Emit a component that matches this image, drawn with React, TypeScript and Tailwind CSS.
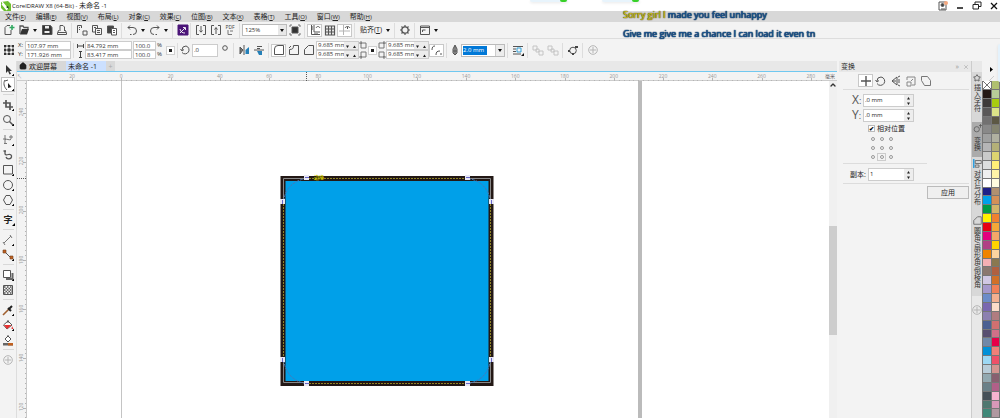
import type { ReactNode } from "react";
import { ChevronUp, Home, Star, X } from "lucide-react";

const menus = [
  ["文件", "F"], ["编辑", "E"], ["视图", "V"], ["布局", "L"], ["对象", "C"], ["效果", "C"],
  ["位图", "B"], ["文本", "X"], ["表格", "T"], ["工具", "O"], ["窗口", "W"], ["帮助", "H"],
];

const paletteLeft = [
  "none", "#231815", "#3e3a39", "#595757", "#727171", "#898989", "#9fa0a0", "#b5b5b6", "#c9caca", "#dcdddd",
  "#efefef", "#ffffff", "#1d2088", "#00a0e9", "#009944", "#fff100", "#e60012", "#e4007f", "#b04085", "#f08300",
  "#f4b0b4", "#8a7870", "#d0c8e4", "#a498cc", "#6c8cc8", "#7a68b0", "#8c80b0", "#4a6092", "#584e70", "#7088a8",
  "#0090d8", "#9cd8f4", "#b8ccd8", "#92a8b0", "#6a8088", "#465058", "#507870", "#408878",
];

const paletteRight = [
  "#b0c070", "#b8cc98", "#a8cc10", "#dce488", "#5c5844", "#848470", "#b0b0a0", "#b4b078", "#dcd470", "#fff078",
  "#fff4a8", "#fffce0", "#b09070", "#d49058", "#d4b468", "#f08030", "#f4a838", "#f4a868", "#ffd400", "#fcd4a0",
  "#8a7850", "#b06040", "#d07028", "#f08058", "#f4b090", "#fcdcc8", "#b07c80", "#d07070", "#d07088", "#e60048",
  "#f08078", "#ee5068", "#d49490", "#886070", "#b06088", "#f8b4d0", "#d898b8", "#b098a0",
];

const field = "min-w-0 border border-[#cccccc] bg-white px-px text-[6px] leading-[7px] text-[#333333] outline-none";

function Glyph({ children, className = "size-3" }: { children: ReactNode; className?: string }) {
  return (
    <svg viewBox="0 0 12 12" className={`${className} shrink-0`} fill="none" stroke="#555555" strokeWidth="1" aria-hidden="true">
      {children}
    </svg>
  );
}

function Tool({ label, boxed, children }: { label: string; boxed?: boolean; children: ReactNode }) {
  return (
    <button
      aria-label={label}
      className={`flex h-[13px] w-[15px] shrink-0 items-center justify-center ${boxed ? "border border-[#c8c8c8] bg-white" : ""}`}
    >
      <Glyph>{children}</Glyph>
    </button>
  );
}

function Arrow() {
  return (
    <svg viewBox="0 0 4 3" className="h-[3px] w-1" aria-hidden="true">
      <path d="M0 0h4L2 3z" fill="#111111" />
    </svg>
  );
}

function Caret({ label }: { label: string }) {
  return (
    <button aria-label={label} className="flex w-2 shrink-0 items-center justify-center">
      <Arrow />
    </button>
  );
}

function Separator() {
  return <div className="mx-[2px] h-[15px] w-px shrink-0 bg-[#dddddd]" />;
}

function Plus() {
  return (
    <>
      <circle cx="6" cy="6" r="4.3" stroke="#b5b5b5" />
      <path d="M6 3v6M3 6h6" stroke="#b5b5b5" />
    </>
  );
}

function Spinner({ wide }: { wide?: boolean }) {
  return wide ? (
    <div className="flex w-[9px] items-center justify-center bg-[#ededed]">
      <svg viewBox="0 0 9 8" className="h-2 w-[9px]" aria-hidden="true">
        <path d="M3 2.5h3L4.500 0zM3 5.500h3L4.500 8z" fill="#222222" />
      </svg>
    </div>
  ) : (
    <svg viewBox="0 0 14 9" className="h-[9px] w-[14px] shrink-0 bg-[#ececec]" aria-hidden="true">
      <path d="M2 3.500h3L3.500 6zM9 6h3l-1.500-2.500z" fill="#222222" />
    </svg>
  );
}

function CornerField({ label }: { label: string }) {
  return (
    <div className="flex h-[9px] w-[43px] overflow-hidden border border-[#cccccc] bg-white">
      <input aria-label={label} defaultValue="9.685 mm" className="w-[28px] min-w-0 pl-px text-[6px] leading-[7px] outline-none" />
      <Spinner />
    </div>
  );
}

function TitleBar() {
  return (
    <header className="flex h-[11px] items-center bg-white">
      <svg viewBox="0 0 10 10" className="ml-px size-[10px]" aria-hidden="true">
        <path d="M0 1l7-1 3 3v7H3L0 7z" fill="#6cc030" />
        <path d="M1 1l6 7M1 3l5 6" stroke="#ffffff" strokeWidth="1.200" />
        <path d="M5 6l3 2-1-3z" fill="#164010" />
      </svg>
      <h1 className="ml-px whitespace-nowrap text-[6px] leading-[10px] text-[#222222]">
        CorelDRAW X8 (64-Bit) - <span className="text-[7px]">未命名</span> -1
      </h1>
      <div className="ml-auto flex items-center gap-[5px]">
        <button aria-label="用户">
          <Glyph>
            <path d="M2 2h7v8H2zM4 9h4" />
            <circle cx="5.500" cy="5" r="1.500" fill="#444444" />
            <circle cx="9" cy="3" r="2" fill="#f4a880" stroke="none" />
          </Glyph>
        </button>
        <button aria-label="最小化">
          <Glyph><path d="M3 8h6" stroke="#111111" strokeWidth="1.500" /></Glyph>
        </button>
        <button aria-label="还原">
          <Glyph><path d="M4 4V2h6v4.500H8M2 4.500h5.500V9H2z" stroke="#222222" /></Glyph>
        </button>
        <button aria-label="关闭">
          <Glyph><path d="M3 3l6 6M9 3L3 9" stroke="#111111" strokeWidth="1.300" /></Glyph>
        </button>
      </div>
    </header>
  );
}

function MenuBar() {
  return (
    <nav className="flex h-[11px] items-center gap-[10px] bg-[#d8d8d8] pl-[5px]">
      {menus.map(([name, key]) => (
        <button key={name} className="shrink-0 whitespace-nowrap text-left text-[7px] leading-[10px] text-[#222222]">
          {name}
          <span className="text-[6px]">(<u>{key}</u>)</span>
        </button>
      ))}
    </nav>
  );
}

function StandardBar() {
  return (
    <div className="flex h-[17px] items-center border-b border-[#dddddd] pl-px">
      <Tool label="新建">
        <path d="M2 10.500V3.500l2-2h3M2 10.500h6V6" />
        <path d="M9 1v5M6.500 3.500h5" stroke="#30a860" strokeWidth="1.600" />
      </Tool>
      <Tool label="打开">
        <path d="M2 10V2h3l1 1.500h4V5" strokeWidth="1.300" />
        <path d="M2 10.500L4 5h7l-2 5.500z" fill="#333333" stroke="none" />
      </Tool>
      <Caret label="最近用过的文件" />
      <Tool label="保存">
        <path d="M1.500 1.500h8l1.500 2V10.500h-9.500z" fill="#333333" />
        <path d="M4 2h4v2.500H4zM3.500 7h5v2h-5z" fill="#eeeeee" stroke="none" />
      </Tool>
      <Tool label="打印"><path d="M4 7V1.500h3L8.500 3v4M3 6L1.500 8.500v2h9v-2L9 6M2 8.500h8" /></Tool>
      <Separator />
      <Tool label="剪切"><path d="M1.500 9V1.500h4V4M3 3.500h1M3 5.500h1M7 7h4v4H7z" /></Tool>
      <Tool label="复制"><path d="M4 8H1.500V1.500h5V4M3 3.500h2M4.500 4.500h6v6h-6zM6 6.500h3M6 8.500h3" /></Tool>
      <Tool label="粘贴">
        <path d="M1.500 2h6v7h-6z" fill="#444444" />
        <path d="M5.500 4.500h5v6.500h-5zM7 6.500h2M7 8.500h2" fill="#ffffff" />
      </Tool>
      <Separator />
      <Tool label="撤消"><path d="M2 3.500h5a3.500 3.500 0 010 7M2 3.500l2-2M2 3.500l2 2M4 10.500h1.500" /></Tool>
      <Caret label="撤消列表" />
      <Tool label="重做"><path d="M10 3.500H5a3.500 3.500 0 000 7M10 3.500l-2-2M10 3.500l-2 2M8 10.500H6.500" /></Tool>
      <Caret label="重做列表" />
      <Separator />
      <Tool label="搜索内容">
        <path d="M1 1h10v10H1z" fill="#4b1478" stroke="#4b1478" />
        <path d="M3 9l5-5M6 3.500h2.500V6M3 5c1 3 2 4 5 4" stroke="#ffffff" strokeWidth=".9" />
      </Tool>
      <div className="h-[15px] w-px shrink-0 bg-[#dddddd]" />
      <div className="flex pl-[2px]">
        <Tool label="导入"><path d="M4 1.500H1.500v9H4M8 1.500h2.500v9H8M6 2v6M4.500 6.500L6 8.200l1.500-1.700" /></Tool>
        <Tool label="导出"><path d="M4 1.500H1.500v9H4M8 1.500h2.500v9H8M6 10V3.500M4.500 5.500L6 3.700l1.500 1.800" /></Tool>
      </div>
      <button className="flex h-[13px] w-[14px] flex-col items-center text-[5px] leading-[6px] text-[#444444]">
        PDF
        <svg viewBox="0 0 8 5" className="h-[5px] w-2" fill="none" stroke="#777777" aria-hidden="true"><path d="M2 0v4.500h4M4 1h3" /></svg>
      </button>
      <Separator />
      <div className="relative h-3 w-[45px] shrink-0">
        <select aria-label="缩放级别" defaultValue="125%" className="block h-3 w-full appearance-none border border-[#bbbbbb] bg-white pl-[2px] text-[6px] leading-[10px] outline-none">
          <option>125%</option>
        </select>
        <div className="pointer-events-none absolute inset-y-px right-px flex w-2 items-center justify-center bg-[#e8e8e8]"><Arrow /></div>
      </div>
      <Tool label="全屏预览">
        <path d="M3 3h6v6H3z" fill="#333333" />
        <path d="M1 3V1h2M9 1h2v2M11 9v2H9M3 11H1V9" stroke="#777777" />
      </Tool>
      <Separator />
      <Tool label="显示标尺" boxed><path d="M2.500 1v9.500H11M5 1v7h6M3 3h1M3 5h1M6 9v1M8 9v1" /><path d="M7 4c1-2 3-2 4 0" /></Tool>
      <Tool label="显示网格"><path d="M1.500 2h9v9h-9zM1.500 5h9M1.500 8h9M4.500 2v9M7.500 2v9" strokeWidth="1.200" /></Tool>
      <Tool label="显示辅助线" boxed><path d="M4.500 1v10M0 7h11" stroke="#b5b5b5" /><path d="M6 4c1-2 4-2 5 0M8.500 3v2" /></Tool>
      <Separator />
      <button className="ml-px w-[26px] whitespace-nowrap text-[7px] leading-[10px] text-[#222222]">贴齐(<u>T</u>)</button>
      <Caret label="贴齐选项" />
      <Separator />
      <Tool label="选项">
        <circle cx="6" cy="6" r="3.200" strokeWidth="1.300" />
        <path d="M6 1v2M6 9v2M1 6h2M9 6h2M2.500 2.500l1.300 1.300M8.200 8.200l1.300 1.300M9.500 2.500L8.200 3.800M3.800 8.200L2.500 9.500" strokeWidth="1.200" />
      </Tool>
      <Separator />
      <Tool label="应用程序启动器"><path d="M1.500 2h9v8.500h-9zM1.500 3.500h9M3.500 6h3M3.500 8V6" /></Tool>
      <Caret label="启动器列表" />
    </div>
  );
}

function PropertyBar() {
  return (
    <div className="flex h-[22px] items-center pl-px">
      <Tool label="对象原点">
        <path d="M2 2h8v8H2zM6 2v8M2 6h8" />
        <path d="M1 1h2v2H1zM5 1h2v2H5zM9 1h2v2H9zM1 5h2v2H1zM4.500 4.500h3v3h-3zM9 5h2v2H9zM1 9h2v2H1zM5 9h2v2H5zM9 9h2v2H9z" fill="#333333" stroke="none" />
      </Tool>
      <div className="ml-[2px] grid grid-cols-[7px_46px] text-[6px] leading-[9px]">
        <label htmlFor="pos-x">X:</label>
        <input id="pos-x" defaultValue="107.97 mm" className={`${field} h-[9px]`} />
        <label htmlFor="pos-y">Y:</label>
        <input id="pos-y" defaultValue="171.926 mm" className={`${field} h-[9px]`} />
      </div>
      <Separator />
      <svg viewBox="0 0 9 18" className="h-[18px] w-[9px]" fill="none" stroke="#444444" aria-hidden="true">
        <path d="M1 5h7M1.500 3v4M7.500 3v4M4.500 10v7M3 10.500h3M3 16.500h3" />
      </svg>
      <div className="grid grid-cols-[47px_23px] gap-x-px">
        <input aria-label="宽度" defaultValue="84.792 mm" className={`${field} h-[9px]`} />
        <input aria-label="水平缩放" defaultValue="100.0" className={`${field} h-[9px]`} />
        <input aria-label="高度" defaultValue="83.417 mm" className={`${field} h-[9px]`} />
        <input aria-label="垂直缩放" defaultValue="100.0" className={`${field} h-[9px]`} />
      </div>
      <div className="ml-px w-[7px] text-[6px] leading-[9px]">%<br />%</div>
      <button aria-label="锁定比率" className="ml-[2px] flex size-[9px] items-center justify-center border border-[#d0d0d0] bg-white"><span className="size-[3px] bg-[#222222]" /></button>
      <Separator />
      <Glyph><path d="M2 8.500A4 4 0 106 2a4 4 0 00-4 4M.5 5L2 7l2-1.500" /></Glyph>
      <input aria-label="旋转角度" defaultValue=".0" className={`${field} h-[13px] w-[26px]`} />
      <Glyph className="ml-px size-3"><circle cx="6" cy="4" r="2.300" /></Glyph>
      <Separator />
      <Tool label="水平镜像">
        <path d="M2 3l3 3-3 4zM6 1v10" fill="#777777" />
        <path d="M7.500 6L11 3v7H7.500z" fill="#2480b8" stroke="none" />
      </Tool>
      <Tool label="垂直镜像">
        <path d="M4 2.500h5M4 4.500h3M1 6h10" />
        <path d="M4 7h5v4H6z" fill="#2480b8" stroke="none" />
      </Tool>
      <Separator />
      <Tool label="圆角" boxed><path d="M1.500 10.500V5a3.500 3.500 0 013.500-3.500h5.500v9z" /></Tool>
      <Tool label="扇形角"><path d="M1.500 10.500v-5c3 0 4-1 4-4h5v9zM1 4l2-2" /></Tool>
      <Tool label="倒棱角"><path d="M1.500 10.500v-5l4-4h5v9z" /></Tool>
      <div className="flex flex-col"><CornerField label="左上角" /><CornerField label="左下角" /></div>
      <svg viewBox="0 0 9 18" className="h-[18px] w-[9px]" fill="none" stroke="#777777" aria-hidden="true">
        <path d="M2 2h5v5H2zM2 11h5v5H2zM0 2h3M2 0v3M0 16h3M2 15v3" />
      </svg>
      <button aria-label="同时编辑所有角" className="flex size-[9px] items-center justify-center border border-[#d0d0d0] bg-white"><span className="size-[3px] bg-[#222222]" /></button>
      <svg viewBox="0 0 9 18" className="h-[18px] w-[9px]" fill="none" stroke="#777777" aria-hidden="true">
        <path d="M2 2h5v5H2zM2 11h5v5H2zM6 2h3M7 0v3M6 16h3M7 15v3" />
      </svg>
      <div className="flex flex-col"><CornerField label="右上角" /><CornerField label="右下角" /></div>
      <Tool label="相对角缩放" boxed><path d="M1 6c0-3 1-4 3-4M5 11c0-3 1-4 4-4M9 10h2" /></Tool>
      <Separator />
      <Glyph><path d="M6 1L4 5v4l2 2 2-2V5zM6 2v8M4 7h4" fill="#aaaaaa" /></Glyph>
      <div className="flex h-[13px] w-[44px] shrink-0 items-center border border-[#bbbbbb] bg-white">
        <input aria-label="轮廓宽度" defaultValue="2.0 mm" className="ml-px h-[9px] w-[24px] min-w-0 bg-[#0078d7] text-[6px] leading-[9px] text-white outline-none" />
        <div className="ml-auto flex h-full items-center border-l border-[#cccccc] bg-[#ececec]"><Caret label="轮廓宽度列表" /></div>
      </div>
      <Separator />
      <Tool label="文本换行">
        <path d="M1 2.500h10M1 5h3M1 7.500h3M1 10h8" />
        <path d="M5 4h4v4H5z" stroke="#30a0d8" />
        <path d="M9 12h3V9z" fill="#111111" stroke="none" />
      </Tool>
      <Separator />
      <Tool label="到图层前面"><path d="M1 2h4v4H1zM4 5h3v3H4zM7 7h4v4H7z" stroke="#c4c4c4" /></Tool>
      <Tool label="到图层后面"><path d="M1 2h4v4H1zM4 5h3v3H4zM7 7h4v4H7z" stroke="#c4c4c4" /></Tool>
      <Separator />
      <Tool label="转换为曲线"><circle cx="6" cy="6.500" r="3.300" /><path d="M8 2h3v2H8zM1 6h2v2H1zM5 9h2v2H5z" fill="#444444" stroke="none" /></Tool>
      <Separator />
      <Tool label="快速自定义"><Plus /></Tool>
    </div>
  );
}

function SideTool({ label, active, plain, children }: { label: string; active?: boolean; plain?: boolean; children: ReactNode }) {
  return (
    <button aria-label={label} className={`flex h-[15px] w-[14px] items-center justify-center ${active ? "border border-[#c0c0c0] bg-white" : ""}`}>
      <Glyph>
        {children}
        {!plain && <path d="M10 12h2v-2z" fill="#000000" stroke="#000000" strokeWidth=".5" />}
      </Glyph>
    </button>
  );
}

function SideLine() {
  return <div className="my-[2px] h-px w-[11px] shrink-0 bg-[#d8d8d8]" />;
}

function Toolbox() {
  return (
    <aside className="flex w-[17px] shrink-0 flex-col items-center border-r border-[#dddddd] pt-px">
      <SideTool label="选择"><path d="M4 1v8l2-2 1.500 3.500 1.500-.7L7.500 7H10z" fill="#333333" stroke="none" /></SideTool>
      <SideTool label="形状" active><path d="M3 1C1 4 2 8 5 11M3 2l3-1" /><path d="M6 4v5l3.500-1z" fill="#222222" stroke="none" /></SideTool>
      <SideLine />
      <SideTool label="裁剪"><path d="M4 1v7h7M1 4h7v7" strokeWidth="1.700" /></SideTool>
      <SideTool label="缩放"><circle cx="5" cy="5" r="3.500" /><path d="M7.500 7.500L11 11" strokeWidth="1.500" /></SideTool>
      <SideLine />
      <SideTool label="手绘"><path d="M1 5h3M3 1v9M3 5.500c3-1 3 1 6 0M2 9.500h3M9 1v4M7 3h4" stroke="#777777" /></SideTool>
      <SideTool label="艺术笔" plain><path d="M3 2v2.500c0 2 2 1.500 3.500 1s3.500.5 3 2.500-4.500 3-5.500 0M1.500 2H4" strokeWidth="1.300" /></SideTool>
      <SideTool label="矩形"><path d="M1.500 1.500h9v8.500h-9z" /></SideTool>
      <SideTool label="椭圆形"><circle cx="6" cy="6" r="4.500" /></SideTool>
      <SideTool label="多边形"><path d="M4 1.500h4L10.500 6 8 10.500H4L1.500 6z" /></SideTool>
      <SideLine />
      <button className="relative flex h-[15px] w-[14px] items-center justify-center text-[9px] font-bold leading-[12px] text-[#222222]">
        字
        <svg viewBox="0 0 2 2" className="absolute bottom-px right-0 size-[3px]" aria-hidden="true"><path d="M0 2h2V0z" /></svg>
      </button>
      <SideLine />
      <SideTool label="平行度量"><path d="M2 9l7-7M1 8l2 3M8 1l2 3" stroke="#777777" /></SideTool>
      <SideTool label="直线连接器"><path d="M3 3l7 7" /><path d="M1 1h3v3H1zM8 7h3v3H8z" fill="#c06020" stroke="#704020" strokeWidth=".6" /></SideTool>
      <SideLine />
      <SideTool label="阴影"><path d="M4 10h6.500V4" strokeWidth="2" stroke="#666666" /><path d="M1.500 1.500h7v7h-7z" fill="#ffffff" /></SideTool>
      <SideTool label="透明度" plain>
        <path d="M1.500 1.500h9v9h-9z" />
        <path d="M2 3h9M2 6h9M2 9h9" strokeWidth="1.500" strokeDasharray="1.500 1.500" />
        <path d="M2 4.500h9M2 7.500h9" strokeWidth="1.500" strokeDasharray="1.500 1.500" strokeDashoffset="1.500" />
      </SideTool>
      <SideLine />
      <SideTool label="颜色滴管"><path d="M1 11l6-6" stroke="#a06030" strokeWidth="1.600" /><path d="M6 4l3 3M7 5l3-3" strokeWidth="2" stroke="#222222" /></SideTool>
      <SideTool label="交互式填充"><path d="M1.500 6l4.500-4 4 4-5 4zM6 4V1" fill="#ffffff" /><path d="M2 6h7.500l-4.500 4zM10 7l1.500 3h-2z" fill="#e83030" stroke="none" /></SideTool>
      <SideTool label="智能填充" plain><path d="M3 5l3-3 3 3-3 3zM6 3V1" fill="#ffffff" /><path d="M1 9h10v2.500H1z" fill="#666666" stroke="none" /><path d="M6 9h5v2.500H6z" fill="#c06020" stroke="none" /></SideTool>
      <SideLine />
      <SideTool label="自定义工具" plain><Plus /></SideTool>
    </aside>
  );
}

function HorizontalRuler() {
  return (
    <svg className="h-[9px] min-w-0 flex-1" aria-hidden="true">
      {Array.from({ length: 163 }, (_, i) => (
        <path key={i} d={`M${Math.round(45 + (i - 9) * 4.925) + 0.5} ${i % 10 === 9 ? 6 : 8}v3`} stroke="#b4b4b4" />
      ))}
      {Array.from({ length: 16 }, (_, i) => (
        <text key={i} x={45 + i * 49.25} y="6" textAnchor="middle" fontSize="5" fill="#999999">{Math.abs((i - 1) * 20)}</text>
      ))}
      <path d="M279.500 0v9" stroke="#555555" strokeDasharray="1 1" />
    </svg>
  );
}

function VerticalRuler() {
  return (
    <div className="relative w-[10px] shrink-0 border-r border-[#c8c8c8]">
      <svg className="absolute inset-0 size-full" aria-hidden="true">
        {Array.from({ length: 69 }, (_, i) => (
          <path key={i} d={`M${i % 10 === 6 ? 6 : 8} ${Math.round(2 + i * 4.917) + 0.5}h3`} stroke="#b4b4b4" />
        ))}
        {Array.from({ length: 7 }, (_, i) => (
          <text key={i} x="0" y="0" transform={`translate(6 ${Math.round(31 + i * 49.17)}) rotate(-90)`} textAnchor="middle" fontSize="5" fill="#999999">{240 - i * 20}</text>
        ))}
        <path d="M0 97.500h9" stroke="#555555" strokeDasharray="1 1" />
      </svg>
    </div>
  );
}

// The drawing page: a rounded-corner edit in progress on a filled square.
function Drawing() {
  const nodes = [[279, 96], [440, 96], [255, 120], [464, 120], [255, 278], [464, 278], [279, 302], [440, 302]];
  return (
    <svg className="absolute inset-0 size-full bg-white" aria-hidden="true">
      <path d="M94.500 0v2000" stroke="#c4c4c4" />
      <path d="M613 0v2000" stroke="#bbbbbb" strokeWidth="4" />
      <rect x="256" y="97.500" width="208" height="205" fill="#00a0e9" stroke="#231815" strokeWidth="5" />
      <path d="M256.500 120V97.500H279M441 97.500h22.500V120M463.500 279v22.500H441M279 301.500h-22.500V279" fill="none" stroke="#888888" />
      <path d="M279 97.500h162M463.500 120v159M279 302.500h162M256.500 120v159" stroke="#908428" strokeDasharray="2 1" />
      <path d="M256.500 120q3-19 22.500-22.500M441 97.500q19 3 22.500 22.500M463.500 279q-3 20-22.500 23.500M279 302.500q-19-3-22.500-23.500" fill="none" stroke="#4878b8" strokeDasharray="3 1" />
      {nodes.map(([x, y]) => (
        <g key={`${x}-${y}`}>
          <rect x={x - 2} y={y - 2} width="5" height="5" fill="#e8e8f4" />
          <path d={y === 96 || y === 302 ? `M${x - 1} ${y + 0.5}h4` : `M${x + 0.5} ${y - 1}v4`} stroke="#6868c8" />
        </g>
      ))}
      <text x="287" y="98" fontSize="5" fontWeight="700" fill="#c8c000">边缘</text>
    </svg>
  );
}

function Workspace() {
  return (
    <main className="mr-[2px] flex min-w-0 flex-1 flex-col">
      <div className="flex h-[11px] items-center border-b border-[#70c8f0] bg-[#e8e8e8] text-[7px] leading-[9px] text-[#222222]">
        <button className="flex h-full w-[49px] items-center gap-[2px] bg-[#d8d8d8] pl-[2px]">
          <Home className="size-2" fill="#222222" strokeWidth={2} />
          欢迎屏幕
        </button>
        <button className="h-full w-10 bg-[#cce0ff] pl-[2px] text-left">未命名 -1</button>
        <button aria-label="新建文档" className="flex h-full w-[9px] items-center justify-center bg-[#d8d8d8] text-[#aaaaaa]">+</button>
      </div>
      <div className="flex h-[9px] border-b border-[#cccccc] bg-[#f3f3f3]">
        <div className="w-[10px] shrink-0 text-[5px] leading-[8px] text-[#999999]">↖</div>
        <HorizontalRuler />
        <span className="w-3 text-[5px] leading-[8px] text-[#555555]">毫米</span>
      </div>
      <div className="flex flex-1">
        <VerticalRuler />
        <div className="relative min-w-0 flex-1"><Drawing /></div>
        <div className="flex w-2 shrink-0 flex-col bg-[#f0f0f0]">
          <ChevronUp className="size-2" strokeWidth={4} />
          <div className="grid flex-1 grid-rows-[137fr_109fr_83fr]">
            <div />
            <div className="bg-[#cdcdcd]" />
          </div>
        </div>
      </div>
    </main>
  );
}

function PanelField({ id, value, className }: { id: string; value: string; className: string }) {
  return (
    <div className={`flex h-[13px] border border-[#cccccc] bg-white ${className}`}>
      <input id={id} defaultValue={value} className="min-w-0 flex-1 pl-px text-[6px] outline-none" />
      <Spinner wide />
    </div>
  );
}

function TransformPanel() {
  return (
    <section className="w-[132px] shrink-0 text-[7px] leading-[9px] text-[#222222]">
      <div className="flex h-[11px] items-center bg-[#e8e8e8] pl-[2px] text-[#222222]">
        <h2>变换</h2>
        <button aria-label="折叠" className="ml-auto mr-1 text-[#999999]">»</button>
        <button aria-label="关闭面板" className="mr-[2px]"><X className="size-[6px] text-[#999999]" /></button>
      </div>
      <div className="ml-1 mr-[2px] flex h-[18px] items-center border-b border-[#dcdcdc] pl-[15px]">
        <Tool label="位置" boxed><path d="M6 1v10M1 6h10" strokeWidth="1.400" /></Tool>
        <Tool label="旋转"><path d="M2 8.500A4.200 4.200 0 106 2a4 4 0 00-4 4M.5 5L2 7l2-1.500" /></Tool>
        <Tool label="缩放和镜像"><path d="M2 6l5-4v8zM8 2l2-1M8 5h2M8 7h2M8 10l2 1M2 6h4" /></Tool>
        <Tool label="大小"><path d="M2 5V2h8v8H7M2 7h4v4H2zM6 6l2-2" stroke="#888888" /></Tool>
        <Tool label="倾斜"><path d="M1.500 1.500h6l3 4v5h-6l-3-5z" stroke="#777777" /></Tool>
      </div>
      <div className="mt-1 flex flex-col gap-[2px]">
        <div className="flex items-center pl-[13px]">
          <label htmlFor="move-x" className="w-[11px] text-[12px] leading-[12px] text-[#555555]">X<span className="text-[9px]">:</span></label>
          <PanelField id="move-x" value=".0 mm" className="w-[51px]" />
        </div>
        <div className="flex items-center pl-[13px]">
          <label htmlFor="move-y" className="w-[11px] text-[12px] leading-[12px] text-[#555555]">Y<span className="text-[9px]">:</span></label>
          <PanelField id="move-y" value=".0 mm" className="w-[51px]" />
        </div>
      </div>
      <label className="mt-[2px] flex items-center gap-[2px] pl-[29px]">
        <input
          type="checkbox"
          defaultChecked
          className="flex size-[7px] appearance-none items-center justify-center border border-[#bbbbbb] bg-white text-[6px] font-bold leading-[6px] text-black checked:before:content-['✔']"
        />
        相对位置
      </label>
      <div className="ml-[29px] mt-[2px] grid w-[27px] grid-cols-3 gap-y-px">
        {Array.from({ length: 9 }, (_, i) => (
          <label key={i} className={`flex h-2 items-center justify-center ${i === 7 ? "border border-[#cccccc]" : ""}`}>
            <input
              type="radio"
              name="anchor"
              aria-label={`锚点 ${i + 1}`}
              defaultChecked={i === 7}
              className="size-1 appearance-none rounded-full border border-[#999999]"
            />
          </label>
        ))}
      </div>
      <div className="ml-1 mr-[44px] mt-[2px] border-t border-[#dcdcdc]" />
      <div className="mt-1 flex items-center pl-[11px]">
        <label htmlFor="copies" className="w-[18px]">副本:</label>
        <PanelField id="copies" value="1" className="w-[46px]" />
      </div>
      <div className="ml-1 mr-[2px] mt-[2px] border-t border-[#dcdcdc]" />
      <button className="ml-auto mr-[2px] mt-[2px] block h-[13px] w-[42px] border border-[#bbbbbb] bg-[#efefef]">应用</button>
    </section>
  );
}

function DockerTabs() {
  const tab = "flex w-full flex-col items-center";
  const label = "text-[7px] leading-[9px] text-[#333333] [writing-mode:vertical-rl]";
  return (
    <div className="flex w-[11px] shrink-0 flex-col items-center border-l border-[#cccccc] bg-[#e8e8e8] pt-[11px]">
      <button className={`${tab} h-[50px] gap-[2px] bg-[#d8d8d8] pt-[2px]`}><Star className="size-2" /><span className={label}>插入字符</span></button>
      <button className={`${tab} h-[35px] gap-1 bg-[#ababab] pt-[2px]`}>
        <Glyph className="size-[9px]"><circle cx="5" cy="7" r="3.500" /><path d="M10 0v5M8 2h4" /></Glyph>
        <span className={label}>变换</span>
      </button>
      <button className={`${tab} h-[57px] gap-[2px] bg-[#d8d8d8] pt-[2px]`}>
        <Glyph className="size-[9px]"><path d="M1 0v12" stroke="#30a0e0" strokeWidth="2" /><path d="M3 2h8v4H3zM3 8h5v3H3z" /></Glyph>
        <span className={label}>对齐与分布</span>
      </button>
      <button className={`${tab} h-[82px] gap-[2px] bg-[#d8d8d8] pt-[2px]`}>
        <Glyph className="size-[9px]"><path d="M1 11V6l5-5h5v10z" /></Glyph>
        <span className={label}>圆角/扇形角/倒棱角</span>
      </button>
      <button aria-label="添加泊坞窗" className="mt-2"><Glyph><Plus /></Glyph></button>
    </div>
  );
}

function Swatches({ colors }: { colors: string[] }) {
  return (
    <div className="flex flex-1 flex-col">
      {colors.map((color) => (
        <button
          key={color}
          aria-label={color}
          className="min-h-0 flex-1 border-b border-r border-[#777777]"
          style={{ backgroundColor: color === "none" ? "#ffffff" : color }}
        >
          {color === "none" && (
            <svg viewBox="0 0 8 8" className="size-2" aria-hidden="true"><path d="M0 0l8 8M8 0L0 8" stroke="#333333" strokeWidth=".7" /></svg>
          )}
        </button>
      ))}
    </div>
  );
}

function Palette() {
  return (
    <div className="flex w-[18px] shrink-0 flex-col">
      <div className="flex h-[20px] flex-col items-end pr-[6px] pt-[6px]">
        <svg viewBox="0 0 4 5" className="h-[5px] w-1" aria-hidden="true"><path d="M0 0l3 2.500L0 5z" /></svg>
        <svg viewBox="0 0 5 5" className="mt-1 size-[5px]" aria-hidden="true"><path d="M0 5l5-5" stroke="#cccccc" /></svg>
      </div>
      <div className="flex flex-1 border-l border-[#777777]">
        <Swatches colors={paletteLeft} />
        <Swatches colors={paletteRight} />
      </div>
    </div>
  );
}

function Overlays() {
  const pill = "absolute top-0 flex h-[2px] w-[38px] justify-end rounded-b bg-[#e8f4fc] pr-px shadow";
  return (
    <>
      <div className={`${pill} left-[530px]`}><span className="h-[2px] w-[7px] rounded-b-full bg-[#38d028]" /></div>
      <div className={`${pill} left-[602px]`}><span className="h-[2px] w-[7px] rounded-b-full bg-[#38d028]" /></div>
      <div className="absolute right-0 top-[44px] h-[38px] w-[2px] rounded-l bg-[#e4f2fc] shadow" />
      <div className="pointer-events-none absolute left-[623px] top-[9px] whitespace-nowrap text-[9px] leading-[12px] text-[#1c5c98] [text-shadow:0_0_1px_#082850,0_0_1px_#082850,0_0_1px_#082850]">
        <p><span className="text-[#d8cc20] [text-shadow:0_0_1px_#504800,0_0_1px_#504800,0_0_1px_#504800]">Sorry girl I</span> made you feel unhappy</p>
        <p className="mt-[7px]">Give me give me a chance I can load it even tn</p>
      </div>
    </>
  );
}

export default function App() {
  return (
    <div className="relative flex min-h-screen flex-col overflow-hidden bg-[#f3f3f3] font-['Open_Sans','Noto_Sans_CJK_SC',sans-serif] text-[#333333]">
      <TitleBar />
      <MenuBar />
      <StandardBar />
      <PropertyBar />
      <div className="flex flex-1">
        <Toolbox />
        <Workspace />
        <TransformPanel />
        <DockerTabs />
        <Palette />
      </div>
      <Overlays />
    </div>
  );
}
